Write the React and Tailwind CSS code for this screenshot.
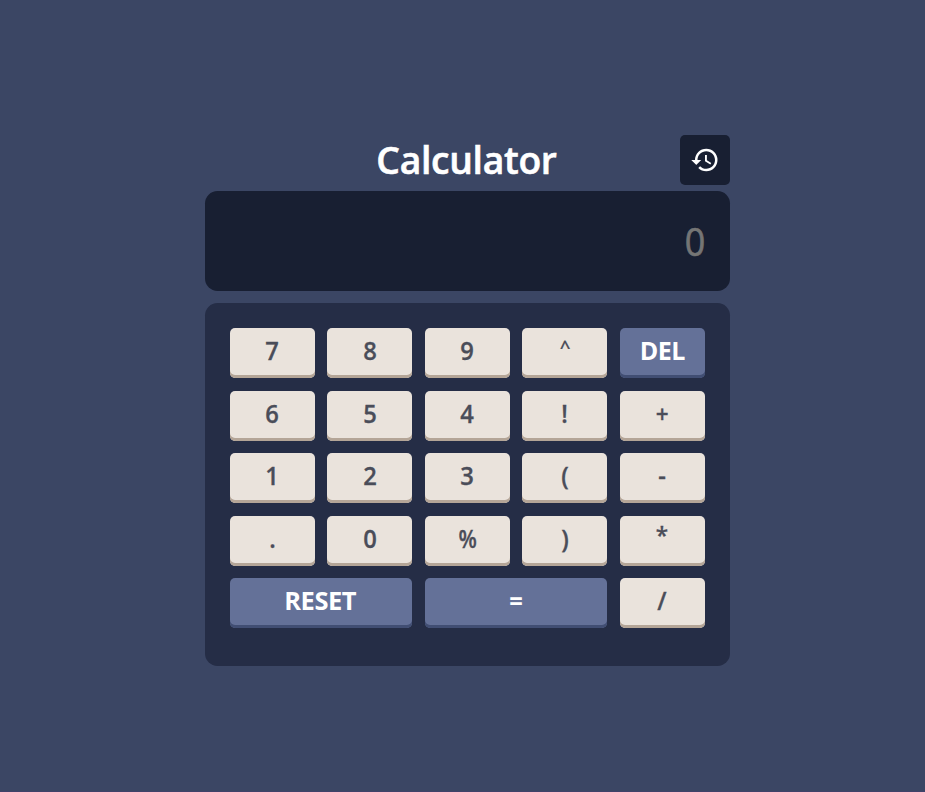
import { MdHistory } from "react-icons/md";

const KEYS = [
  "7", "8", "9", "^", "DEL",
  "6", "5", "4", "!", "+",
  "1", "2", "3", "(", "-",
  ".", "0", "%", ")", "*",
  "RESET", "=", "/",
];

const ACCENT = ["DEL", "RESET", "="];
const WIDE = ["RESET", "="];

// Optical adjustments for individual labels.
const GLYPHS = {
  "^": "scale-75 -translate-y-[4px]",
  "+": "scale-90 translate-y-px",
  "*": "scale-90 -translate-y-[3px]",
  "%": "scale-x-[0.85]",
  DEL: "tracking-[-0.5px]",
  RESET: "tracking-[-0.5px] scale-x-[1.02] -translate-x-px",
};

function Key({ label }) {
  const tone = ACCENT.includes(label)
    ? "bg-[#647198] font-bold text-white shadow-[inset_0_-3px_0_#414e73]"
    : "bg-[#eae3dc] font-semibold text-[#4a4d59] shadow-[inset_0_-3px_0_#b4a597]";
  const span = WIDE.includes(label) ? "col-span-2" : "";
  return (
    <button
      className={`flex h-[50px] items-center justify-center rounded-[5px] pb-[5px] text-[25px] leading-none ${tone} ${span}`}
    >
      <span
        className={`inline-block ${GLYPHS[label] ?? "scale-x-95"} ${ACCENT.includes(label) ? "" : "[-webkit-text-stroke:0.3px_#4a4d59]"}`}
      >
        {label}
      </span>
    </button>
  );
}

export default function App() {
  return (
    <div className="flex h-screen flex-col items-center overflow-hidden border-b border-[#40426a] bg-[#3b4664] pt-[135px] pl-[10px] font-['Trebuchet_MS','Open_Sans',sans-serif]">
      <main className="w-[525px]">
        <header className="grid h-[50px] grid-cols-[50px_1fr_50px] items-center">
          <h1 className="col-start-2 -translate-x-px scale-x-[0.98] pb-[3px] text-center text-[38px] leading-none font-semibold text-white tracking-[-0.3px] [-webkit-text-stroke:0.6px_white]">
            Calculator
          </h1>
          <button aria-label="History" className="flex size-[50px] items-center justify-center rounded-[5px] bg-[#181f32] text-white">
            <MdHistory size={30} />
          </button>
        </header>
        <div className="mt-[6px] flex h-[100px] items-center justify-end rounded-[12.5px] bg-[#181f32] px-[25px] pb-[2px] text-[39px] leading-none text-[#757575]">
          <span className="origin-right scale-x-[0.92] [-webkit-text-stroke:0.7px_#757575]">0</span>
        </div>
        <section className="mt-3 grid h-[363px] grid-cols-[repeat(5,85px)] content-start gap-x-[12.45px] gap-y-[12.5px] rounded-[12.5px] bg-[#252d46] p-[25px]">
          {KEYS.map((label) => (
            <Key key={label} label={label} />
          ))}
        </section>
      </main>
    </div>
  );
}
